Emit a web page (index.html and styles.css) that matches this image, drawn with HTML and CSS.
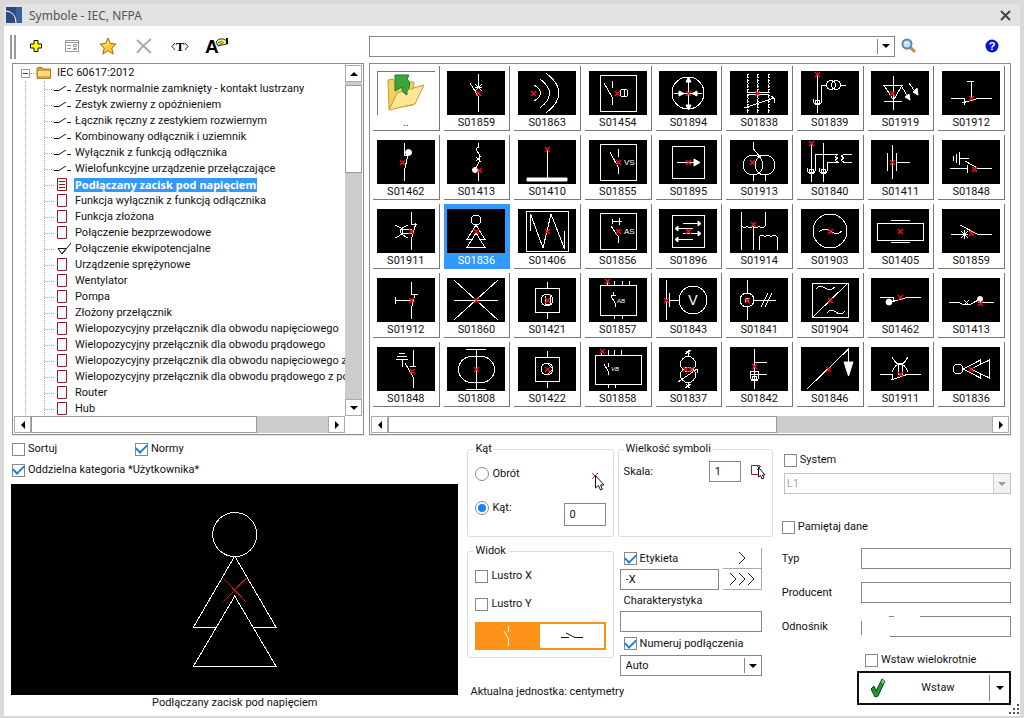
FILE: index.html
```html
<!DOCTYPE html>
<html lang="pl">
<head>
<meta charset="utf-8">
<title>Symbole - IEC, NFPA</title>
<link rel="stylesheet" href="styles.css">
</head>
<body>

<svg class="defs" width="0" height="0">
	<symbol id="x" viewBox="0 0 7 7"><path d="M1 1L6 6M6 1L1 6" stroke="#f01418" stroke-width="1.400" fill="none"/></symbol>
	<symbol id="star" viewBox="0 0 9 9"><path d="M1 1L8 8M8 1L1 8M1 4.5H8" stroke="#fff" fill="none"/></symbol>
	<symbol id="sw" viewBox="0 0 17 14"><path d="M0 8.500H5L12 4M13 8.500H17" stroke="#111" stroke-width="1" fill="none"/></symbol>
	<symbol id="doc" viewBox="0 0 17 14"><path d="M3.500 .5H12.500V12.500H3.500Z" stroke="#8c1c24" fill="#fff"/></symbol>
	<symbol id="docsel" viewBox="0 0 17 14"><path d="M3.500 .5H12.500V12.500H3.500ZM5 3.500H11M5 6.500H11M5 9.500H11" stroke="#8c1c24" fill="#fff"/></symbol>
	<symbol id="eq" viewBox="0 0 17 14"><path d="M4 6.500H12L8 12ZM8 12L17 1" stroke="#111" fill="none"/></symbol>
	<symbol id="down" viewBox="0 0 8 4"><path d="M0 0H8L4 4Z"/></symbol>
	<symbol id="up" viewBox="0 0 8 4"><path d="M0 4H8L4 0Z"/></symbol>
	<symbol id="left" viewBox="0 0 4 8"><path d="M4 0V8L0 4Z"/></symbol>
	<symbol id="right" viewBox="0 0 4 8"><path d="M0 0V8L4 4Z"/></symbol>
</svg>

<div class="window">
	<header class="titlebar">
		<svg class="logo" width="16" height="16" viewBox="0 0 16 16"><rect width="16" height="16" fill="#2b4a80"/><path d="M10 0H16V16H10Z" fill="#3c5f9a"/><path d="M0 4Q10 5 10 16M0 4V3" stroke="#fff" fill="none"/></svg>
		<h1>Symbole - IEC, NFPA</h1>
		<button class="close" aria-label="Zamknij"><svg width="11" height="11" viewBox="0 0 11 11"><path d="M1 1L10 10M10 1L1 10" stroke="#444" stroke-width="2"/></svg></button>
	</header>

	<main>
		<div class="top">
			<section class="browser">
				<div class="toolbar">
					<span class="handle"></span>
					<button aria-label="Dodaj"><svg width="20" height="20" viewBox="0 0 20 20"><path d="M8 4.500H12V8H15.500V12H12V15.500H8V12H4.500V8H8Z" fill="#ff0" stroke="#111" stroke-width="1"/></svg></button>
					<button aria-label="Właściwości"><svg width="20" height="20" viewBox="0 0 20 20"><path d="M3.500 4.500H16.500V15.500H3.500ZM3 6.500H17M5 9.500H9M5 12.500H9M11.500 8.500H14.500V10.500H11.500ZM11.500 12.500H14.500V13.500H11.500Z" fill="none" stroke="#999"/></svg></button>
					<button aria-label="Ulubione"><svg width="20" height="20" viewBox="0 0 20 20"><path d="M10 2L12.300 7.500L18 8L13.800 12L15.200 18L10 14.800L4.800 18L6.200 12L2 8L7.700 7.500Z" fill="#ffc928" stroke="#a8690c"/><path d="M10 4.500L11 8.500L8 10L5 9L9 8.500Z" fill="#fff0a0"/></svg></button>
					<button aria-label="Usuń"><svg width="20" height="20" viewBox="0 0 20 20"><path d="M3 4L17 17M17 3Q9 9 3 17" fill="none" stroke="#aaa" stroke-width="2"/></svg></button>
					<button aria-label="Tekst"><svg width="20" height="20" viewBox="0 0 20 20"><path d="M5 7L2 10.500L5 14M15 7L18 10.500L15 14" fill="none" stroke="#222"/><text class="serif" x="10" y="15" text-anchor="middle">T</text></svg></button>
					<button aria-label="Czcionka"><svg width="26" height="20" viewBox="0 0 26 20"><text class="sans" x="-1" y="17">A</text><path d="M10 6L13 3H18L21 5V8L16 9L12 10Z" fill="#f4ee62" stroke="#333"/><path d="M12 7L16 5M13 9L18 6" stroke="#555"/><path d="M20 2H22V8H20Z" fill="#111"/></svg></button>
				</div>
				<div class="panel tree">
					<div class="tree-body">
						<div class="tree-view">
							<div class="root">
								<svg width="9" height="9" viewBox="0 0 9 9"><path d="M.5.5H8.500V8.500H.5Z" fill="#fff" stroke="#999"/><path d="M2 4.500H7" stroke="#335"/></svg>
								<i class="dots"></i>
								<svg width="16" height="12" viewBox="0 0 16 12"><path d="M1 2Q1 .5 2 .5H6L7 2H14.500V11.500H1Z" fill="#d9a636" stroke="#a87f28"/><path d="M2 4H14V11H2Z" fill="#f7dc84"/><path d="M2 9H14V11H2Z" fill="#dba93c"/></svg>
								<span>IEC 60617:2012</span>
							</div>
							<div class="branch">
								<ul>
									<li><svg><use href="#sw"/></svg><span>Zestyk normalnie zamknięty - kontakt lustrzany</span></li>
									<li><svg><use href="#sw"/></svg><span>Zestyk zwierny z opóźnieniem</span></li>
									<li><svg><use href="#sw"/></svg><span>Łącznik ręczny z zestykiem rozwiernym</span></li>
									<li><svg><use href="#sw"/></svg><span>Kombinowany odłącznik i uziemnik</span></li>
									<li><svg><use href="#sw"/></svg><span>Wyłącznik z funkcją odłącznika</span></li>
									<li><svg><use href="#sw"/></svg><span>Wielofunkcyjne urządzenie przełączające</span></li>
									<li class="selected"><svg><use href="#docsel"/></svg><span>Podłączany zacisk pod napięciem</span></li>
									<li><svg><use href="#doc"/></svg><span>Funkcja wyłącznik z funkcją odłącznika</span></li>
									<li><svg><use href="#doc"/></svg><span>Funkcja złożona</span></li>
									<li><svg><use href="#doc"/></svg><span>Połączenie bezprzewodowe</span></li>
									<li><svg><use href="#eq"/></svg><span>Połączenie ekwipotencjalne</span></li>
									<li><svg><use href="#doc"/></svg><span>Urządzenie sprężynowe</span></li>
									<li><svg><use href="#doc"/></svg><span>Wentylator</span></li>
									<li><svg><use href="#doc"/></svg><span>Pompa</span></li>
									<li><svg><use href="#doc"/></svg><span>Złożony przełącznik</span></li>
									<li><svg><use href="#doc"/></svg><span>Wielopozycyjny przełącznik dla obwodu napięciowego</span></li>
									<li><svg><use href="#doc"/></svg><span>Wielopozycyjny przełącznik dla obwodu prądowego</span></li>
									<li><svg><use href="#doc"/></svg><span>Wielopozycyjny przełącznik dla obwodu napięciowego z p</span></li>
									<li><svg><use href="#doc"/></svg><span>Wielopozycyjny przełącznik dla obwodu prądowego z pol</span></li>
									<li><svg><use href="#doc"/></svg><span>Router</span></li>
									<li><svg><use href="#doc"/></svg><span>Hub</span></li>
									<li><svg><use href="#doc"/></svg></li>
								</ul>
							</div>
						</div>
						<div class="vscroll">
							<button aria-label="W górę"><svg width="8" height="4"><use href="#up"/></svg></button>
							<span class="thumb"></span>
							<button aria-label="W dół"><svg width="8" height="4"><use href="#down"/></svg></button>
						</div>
					</div>
					<div class="hscroll">
						<button aria-label="W lewo"><svg width="4" height="8"><use href="#left"/></svg></button>
						<span class="thumb"></span>
						<button aria-label="W prawo"><svg width="4" height="8"><use href="#right"/></svg></button>
						<span class="corner"></span>
					</div>
				</div>
			</section>

			<section class="library">
				<div class="search">
					<div class="combo">
						<input type="text" aria-label="Szukaj">
						<span class="arrow"><svg width="8" height="4"><use href="#down"/></svg></span>
					</div>
					<button aria-label="Szukaj"><svg width="16" height="16" viewBox="0 0 16 16"><path d="M9 9L14 14" stroke="#c98a3c" stroke-width="3"/><circle cx="6" cy="6" r="4.500" fill="#bfe3f8" stroke="#5b86a8" stroke-width="2"/><path d="M4 6Q4 4 6 4" stroke="#fff" fill="none"/></svg></button>
					<button class="help" aria-label="Pomoc"><svg width="14" height="14" viewBox="0 0 14 14"><circle cx="7" cy="7" r="6.500" fill="#0a14c8"/><text class="q" x="7" y="11" text-anchor="middle">?</text></svg></button>
				</div>
				<div class="panel symbols">
					<div class="tiles">
						<button class="tile"><svg class="up" viewBox="0 0 58 44"><path d="M0 .5H58M.5 0V44" stroke="#777"/><path d="M11 9L16 8L18 11H37L36 34L12 38Z" fill="#f3cf62" stroke="#c99a30"/><path d="M20 22L47 14L38 33L12 39Z" fill="#ffe694" stroke="#c99a30"/><path d="M18 4H32L30 8Q34 11 32 17Q29 19 30 24Q24 21 25 16L18 20Z" fill="#3aa53c" stroke="#1c7a24"/></svg>..</button>
						<button class="tile"><svg viewBox="0 0 58 44"><path d="M31.500 3V16M23 12L31.500 26V41"/><use href="#star" x="27" y="12" width="9" height="9"/><use href="#x" x="28" y="19" width="7" height="7"/></svg>S01859</button>
						<button class="tile"><svg viewBox="0 0 58 44"><path d="M16 14Q29 22 16 30M22 8Q41 22 22 37M28 2Q54 22 28 42"/><use href="#x" x="12" y="19" width="7" height="7"/></svg>S01863</button>
						<button class="tile"><svg viewBox="0 0 58 44"><path d="M11.500 4.500H47.500V40.500H11.500ZM23.500 10V17M15 12L23.500 27V34M35.500 18V26"/><circle cx="35" cy="22" r="4"/><use href="#x" x="25" y="19" width="7" height="7"/></svg>S01454</button>
						<button class="tile"><svg viewBox="0 0 58 44"><circle cx="29" cy="22" r="16"/><path d="M15 22.500H43M29.500 8V36"/><path class="f" d="M20 20L25 22.500L20 25ZM38 20L33 22.500L38 25ZM27 11L29.500 6L32 11ZM27 34L29.500 39L32 34Z"/><use href="#x" x="26" y="19" width="7" height="7"/></svg>S01894</button>
						<button class="tile"><svg viewBox="0 0 58 44"><path stroke-dasharray="4 1" d="M17.500 3V42M27.500 3V42M38.500 3V42"/><path stroke-dasharray="1 2" d="M18.500 3V42M28.500 3V42M39.500 3V42"/><path d="M18 21.500H39M18 23.500H39M14 37L44 27M41 25L45 28L44 32"/><use href="#x" x="24" y="19" width="7" height="7"/></svg>S01838</button>
						<button class="tile"><svg viewBox="0 0 58 44"><path d="M16.500 3V42M12 28Q12 34 16.500 34Q20.500 34 20.500 29V14.500H25M39 14.500H45"/><circle cx="30" cy="14" r="4.500"/><circle cx="35" cy="14" r="4.500"/><circle cx="16.500" cy="31" r="2"/><use href="#x" x="13" y="0" width="7" height="7"/></svg>S01839</button>
						<button class="tile"><svg viewBox="0 0 58 44"><path d="M22.500 5V39M13 14.500H31L22.500 29ZM13 30.500H31M31 16L37 26M38 12L45 22"/><path class="f" d="M34 26L38 23L39 29ZM42 21L46 17L47 24Z"/><use href="#x" x="18" y="19" width="7" height="7"/></svg>S01919</button>
						<button class="tile"><svg viewBox="0 0 58 44"><path d="M25 10.500H32M29.500 10V27M9 27.500H22.500V34M20 32L36 27.500H50"/><use href="#x" x="26" y="24" width="7" height="7"/></svg>S01912</button>

						<button class="tile"><svg viewBox="0 0 58 44"><path d="M27.500 3V15.500H31M31 15L27.500 30V41"/><circle class="f" cx="31.500" cy="12.500" r="3"/><use href="#x" x="22" y="19" width="7" height="7"/></svg>S01462</button>
						<button class="tile"><svg viewBox="0 0 58 44"><path d="M31.500 3V7L29 9L32 14V22L28 30M31.500 30V41M29 17L34 22M34 16L29 21"/><circle class="f" cx="28" cy="30" r="2.500"/><use href="#x" x="29" y="27" width="7" height="7"/></svg>S01413</button>
						<button class="tile"><svg viewBox="0 0 58 44"><path d="M29.500 9V38"/><path class="f" d="M9 38H49V41H9Z"/><use href="#x" x="26" y="6" width="7" height="7"/></svg>S01410</button>
						<button class="tile"><svg viewBox="0 0 58 44"><path d="M11.500 4.500H47.500V40.500H11.500ZM29.500 9V17M21 12L29.500 28V34"/><text x="35" y="25">VS</text><use href="#x" x="26" y="19" width="7" height="7"/></svg>S01855</button>
						<button class="tile"><svg viewBox="0 0 58 44"><path d="M13.500 6.500H45.500V38.500H13.500ZM18 22.500H36"/><path class="f" d="M35 19L41 22.500L35 26Z"/><use href="#x" x="26" y="19" width="7" height="7"/></svg>S01895</button>
						<button class="tile"><svg viewBox="0 0 58 44"><circle cx="23" cy="25" r="10"/><circle cx="35" cy="25" r="10"/><path d="M23.500 2V9L31 18M23.500 35V41M35.500 35V41"/><use href="#x" x="19" y="19" width="7" height="7"/></svg>S01913</button>
						<button class="tile"><svg viewBox="0 0 58 44"><path d="M10.500 3V42M22.500 3V42M6 28Q6 34 10.500 34Q14.500 34 14.500 28V14.500H36L34 17L37 18L34 20L37 22.500H26.500V28Q26.500 34 22.500 34Q18 34 18 28M51 14.500H43L40 16L43 18L40 20L43 22.500H51"/><circle cx="10.500" cy="31" r="2"/><circle cx="22.500" cy="31" r="2"/><use href="#x" x="7" y="0" width="7" height="7"/></svg>S01840</button>
						<button class="tile"><svg viewBox="0 0 58 44"><path d="M16.500 13V31M21.500 5V39M25.500 13V31M25 22.500H39"/><use href="#x" x="18" y="19" width="7" height="7"/></svg>S01411</button>
						<button class="tile"><svg viewBox="0 0 58 44"><path d="M11.500 16V21M14.500 14V23M17.500 12V25M17 18.500H27M8 28.500H26M25.500 25V33M23 21L36 28.500H50"/><use href="#x" x="29" y="26" width="7" height="7"/></svg>S01848</button>

						<button class="tile"><svg viewBox="0 0 58 44"><path d="M34.500 3V15.500H40M39 14L34.500 30V41M18 16Q34 22 18 29M31 16Q16 22 31 29M25 20.500H35M25 24.500H35"/><use href="#x" x="31" y="19" width="7" height="7"/></svg>S01911</button>
						<button class="tile selected"><svg viewBox="0 0 58 44"><circle cx="29" cy="11" r="5"/><path d="M29 16L20 30.500H24M29 16L38 30.500H34M29 24L20 38.500H38Z"/><use href="#x" x="26" y="19" width="7" height="7"/></svg>S01836</button>
						<button class="tile"><svg viewBox="0 0 58 44"><path d="M8.500 2.500H50.500V42.500H8.500ZM12.500 22V5L25 39L33 5L46.500 40V22"/><use href="#x" x="26" y="19" width="7" height="7"/></svg>S01406</button>
						<button class="tile"><svg viewBox="0 0 58 44"><path d="M11.500 4.500H47.500V40.500H11.500ZM23.500 10V15M23 12.500H33M30.500 9V16M22 17L29.500 28V34"/><text x="35" y="25">AS</text><use href="#x" x="26" y="19" width="7" height="7"/></svg>S01856</button>
						<button class="tile"><svg viewBox="0 0 58 44"><path d="M13.500 6.500H45.500V38.500H13.500ZM24 14.500H40M18 19.500H34M24 24.500H40M18 30.500H34"/><path class="f" d="M39 12L42 14.500L39 17ZM19 17L16 19.500L19 22ZM39 22L42 24.500L39 27ZM19 28L16 30.500L19 33Z"/><use href="#x" x="26" y="19" width="7" height="7"/></svg>S01896</button>
						<button class="tile"><svg viewBox="0 0 58 44"><path d="M11.500 3V41M23.500 18V41M35.500 3V17M12 17Q15 21 17 17Q20 21 23 17Q26 21 29 17Q32 21 35 17M29.500 41V28M29 28Q32 24 35 28Q38 24 41 28Q44 24 47 28M47.500 28V41"/><use href="#x" x="20" y="12" width="7" height="7"/></svg>S01914</button>
						<button class="tile"><svg viewBox="0 0 58 44"><circle cx="29" cy="22" r="17"/><path d="M18 23Q23 18 29 22Q36 27 41 22"/><use href="#x" x="26" y="19" width="7" height="7"/></svg>S01903</button>
						<button class="tile"><svg viewBox="0 0 58 44"><path d="M6.500 14.500H52.500V31.500H6.500ZM20 11.500H39M20 33.500H39"/><use href="#x" x="26" y="19" width="7" height="7"/></svg>S01405</button>
						<button class="tile"><svg viewBox="0 0 58 44"><path d="M9 25.500H24M18 16L36 25.500H50M22.500 21V30"/><use href="#star" x="18" y="21" width="9" height="9"/><use href="#x" x="26" y="21" width="7" height="7"/></svg>S01859</button>

						<button class="tile"><svg viewBox="0 0 58 44"><path d="M18.500 19V26M18 22.500H36M34.500 4V16.500H41M38 16L34.500 30V41"/><use href="#x" x="31" y="19" width="7" height="7"/></svg>S01912</button>
						<button class="tile"><svg viewBox="0 0 58 44"><path d="M7 2L51 42M51 2L7 42M7 22.500H51"/><use href="#x" x="26" y="19" width="7" height="7"/></svg>S01860</button>
						<button class="tile"><svg viewBox="0 0 58 44"><path d="M17.500 10.500H41.500V34.500H17.500ZM29.500 4V10M29.500 35V41M27 18V26H32V18"/><circle cx="29" cy="22" r="6"/><use href="#x" x="26" y="19" width="7" height="7"/></svg>S01421</button>
						<button class="tile"><svg viewBox="0 0 58 44"><path d="M11.500 7.500H47.500V37.500H11.500ZM18.500 3V7M25.500 3V7M33.500 3V7M40.500 3V7M25.500 38V41M33.500 38V41M22 17.500H27M24.500 14V18M22 18L26 25V29"/><text class="tiny" x="28" y="25">AB</text><use href="#x" x="15" y="0" width="7" height="7"/></svg>S01857</button>
						<button class="tile"><svg viewBox="0 0 58 44"><path d="M7.500 2V42M10.500 15V29M10 22.500H20"/><circle cx="34" cy="22" r="14"/><text class="big" x="34" y="27" text-anchor="middle">V</text><use href="#x" x="4" y="19" width="7" height="7"/></svg>S01843</button>
						<button class="tile"><svg viewBox="0 0 58 44"><circle cx="17" cy="22" r="7"/><circle cx="17" cy="22" r="2"/><path d="M17.500 2V15M17.500 29V42M24 22.500H46M31 29L38 15M35 29L42 15"/><use href="#x" x="14" y="19" width="7" height="7"/></svg>S01841</button>
						<button class="tile"><svg viewBox="0 0 58 44"><path d="M11.500 5.500H47.500V39.500H11.500ZM12 39L47 5M15 11Q19 6 24 10Q29 14 34 9M26 35Q30 30 35 34Q40 38 44 33"/><use href="#x" x="26" y="19" width="7" height="7"/></svg>S01904</button>
						<button class="tile"><svg viewBox="0 0 58 44"><path d="M9 19.500H22.500V24M20 24L36 19.500H50"/><circle class="f" cx="18" cy="24" r="3"/><use href="#x" x="26" y="16" width="7" height="7"/></svg>S01462</button>
						<button class="tile"><svg viewBox="0 0 58 44"><path d="M7 24.500H17L20 26H29L38 21M36 24.500H52M22 22L27 27M27 22L22 27"/><circle class="f" cx="38" cy="21" r="2.500"/><use href="#x" x="35" y="22" width="7" height="7"/></svg>S01413</button>

						<button class="tile"><svg viewBox="0 0 58 44"><path d="M22 6.500H28M20 9.500H30M19 12.500H31M25.500 12V20M36.500 3V19M33 19.500H39M28 16L36.500 31V41"/><use href="#x" x="32" y="21" width="7" height="7"/></svg>S01848</button>
						<button class="tile"><svg viewBox="0 0 58 44"><rect x="11.500" y="9.500" width="36" height="26" rx="13"/><path d="M29.500 2V42M19 2.500H39M19 42.500H39"/><use href="#x" x="26" y="19" width="7" height="7"/></svg>S01808</button>
						<button class="tile"><svg viewBox="0 0 58 44"><path d="M17.500 10.500H41.500V34.500H17.500ZM29.500 4V10M29.500 35V41M29 16L35 22L29 28"/><circle cx="29" cy="22" r="6"/><use href="#x" x="26" y="19" width="7" height="7"/></svg>S01422</button>
						<button class="tile"><svg viewBox="0 0 58 44"><path d="M6.500 8.500H52.500V37.500H6.500ZM12.500 3V8M19.500 3V8M25.500 3V8M32.500 3V8M19.500 38V41M26.500 38V41M15 17L19.500 25V28M19.500 16V20"/><text class="tiny" x="22" y="24">VB</text><use href="#x" x="10" y="1" width="7" height="7"/></svg>S01858</button>
						<button class="tile"><svg viewBox="0 0 58 44"><circle cx="29" cy="17" r="7.500"/><circle cx="29" cy="28" r="7.500"/><path d="M19 35L38 22L39 26M29.500 3V9M26 7L32 3M27 4L31 7M29.500 36V41M26 41L32 37M27 37L31 41"/><use href="#x" x="23" y="19" width="7" height="7"/><use href="#x" x="29" y="19" width="7" height="7"/></svg>S01837</button>
						<button class="tile"><svg viewBox="0 0 58 44"><path d="M24.500 2V42M25 15.500H37M19.500 27.500H37M20.500 24V30Q20.500 34 24.500 34Q28.500 34 28.500 30V24M20 24.500H29"/><circle cx="24.500" cy="31" r="2"/><use href="#x" x="21" y="16" width="7" height="7"/></svg>S01842</button>
						<button class="tile"><svg viewBox="0 0 58 44"><path d="M6 42L47.500 2V15"/><path class="f" d="M43 15H52L47.500 29Z"/><use href="#x" x="24" y="19" width="7" height="7"/></svg>S01846</button>
						<button class="tile"><svg viewBox="0 0 58 44"><path d="M9 27.500H21.500V33M20 33L36 27.500H50M21 10Q29 25 37 10M21 25Q29 8 37 25M27.500 18V28M31.500 18V28"/><use href="#x" x="26" y="24" width="7" height="7"/></svg>S01911</button>
						<button class="tile"><svg viewBox="0 0 58 44"><circle cx="16" cy="22" r="5"/><path d="M38.500 17V13L21 22L38.500 31V27M47.500 13V31L29 22Z"/><use href="#x" x="26" y="19" width="7" height="7"/></svg>S01836</button>
					</div>
					<div class="hscroll">
						<button aria-label="W lewo"><svg width="4" height="8"><use href="#left"/></svg></button>
						<span class="thumb"></span>
						<button aria-label="W prawo"><svg width="4" height="8"><use href="#right"/></svg></button>
					</div>
				</div>
			</section>
		</div>

		<div class="bottom">
			<section class="preview">
				<div class="options">
					<label><input type="checkbox">Sortuj</label>
					<label><input type="checkbox" checked>Normy</label>
					<label class="wide"><input type="checkbox" checked>Oddzielna kategoria *Użytkownika*</label>
				</div>
				<svg class="canvas" viewBox="0 0 447 211">
					<circle cx="223.500" cy="50.500" r="22"/>
					<path d="M223.500 72L182 143.500H205M223.500 72L265 143.500H242M223.500 112L182 182.500H265Z"/>
					<path class="mark" d="M212 94L235 118M235 94L212 118"/>
				</svg>
				<p>Podłączany zacisk pod napięciem</p>
			</section>

			<section class="settings">
				<fieldset class="angle">
					<legend>Kąt</legend>
					<div class="row">
						<label><input type="radio" name="angle">Obrót</label>
						<svg width="16" height="20" viewBox="0 0 16 20"><path d="M2 2L8 8M8 2L2 8" stroke="#a03040"/><path d="M5.500 4.500V17L8.500 14.500L10.500 19L12.500 18L10.500 14H14Z" fill="#fff" stroke="#111"/></svg>
					</div>
					<div class="row">
						<label><input type="radio" name="angle" checked>Kąt:</label>
						<input type="text" class="deg" value="0" aria-label="Kąt">
					</div>
				</fieldset>
				<fieldset class="size">
					<legend>Wielkość symboli</legend>
					<div class="row">
						<label for="scale">Skala:</label>
						<input type="text" id="scale" value="1">
						<svg width="16" height="16" viewBox="0 0 16 16"><path d="M1.500 1.500H9.500V10.500H1.500Z" fill="none" stroke="#9c1c24"/><path d="M6 1L11 6M11 2L7 6" stroke="#9c1c24"/><path d="M8.500 3.500V13L10.500 11.500L12 15L14 14L12.500 11H15Z" fill="#fff" stroke="#111"/></svg>
					</div>
				</fieldset>
				<fieldset class="view">
					<legend>Widok</legend>
					<label><input type="checkbox">Lustro X</label>
					<label><input type="checkbox">Lustro Y</label>
					<div class="toggle">
						<button class="on" aria-label="Pionowo"><svg width="10" height="22" viewBox="0 0 10 22"><path d="M6.500 1V7M2 6L6.500 14V21" stroke="#fff" fill="none"/></svg></button>
						<button aria-label="Poziomo"><svg width="22" height="8" viewBox="0 0 22 8"><path d="M0 5.500H8M5 1L14 5.500H22" stroke="#111" stroke-width="1" fill="none"/></svg></button>
					</div>
				</fieldset>
				<div class="labels">
					<label><input type="checkbox" checked>Etykieta</label>
					<button class="flat" aria-label="Następny"><svg width="8" height="14" viewBox="0 0 8 14"><path d="M1 1L7 7L1 13"/></svg></button>
					<input type="text" value="-X" aria-label="Etykieta">
					<button class="flat" aria-label="Ostatni"><svg width="26" height="14" viewBox="0 0 26 14"><path d="M1 1L7 7L1 13M10 1L16 7L10 13M19 1L25 7L19 13"/></svg></button>
					<label class="wide" for="char">Charakterystyka</label>
					<input class="wide" type="text" id="char">
					<label class="wide number"><input type="checkbox" checked>Numeruj podłączenia</label>
					<div class="combo wide">
						<select aria-label="Numeruj podłączenia"><option>Auto</option></select>
						<span class="arrow"><svg width="8" height="4"><use href="#down"/></svg></span>
					</div>
				</div>
				<p>Aktualna jednostka: centymetry</p>
			</section>

			<section class="data">
				<label><input type="checkbox">System</label>
				<div class="combo disabled">
					<select disabled aria-label="System"><option>L1</option></select>
					<span class="arrow"><svg width="8" height="4"><use href="#down"/></svg></span>
				</div>
				<label class="remember"><input type="checkbox">Pamiętaj dane</label>
				<div class="fields">
					<label for="typ">Typ</label><input type="text" id="typ">
					<label for="prod">Producent</label><input type="text" id="prod">
					<label for="link">Odnośnik</label><input type="text" id="link" class="worn">
				</div>
				<div class="insert">
					<label><input type="checkbox">Wstaw wielokrotnie</label>
					<div class="split">
						<button class="go"><svg width="18" height="22" viewBox="0 0 18 22"><path d="M2 12L5 9L7 14L13 2L16 4L9 19L6 20Z" fill="#1f9a2c" stroke="#123c14" stroke-width="1"/><path d="M12 5L14 2L16 4L14 7Z" fill="#9ab89a"/></svg><span>Wstaw</span></button>
						<button class="more" aria-label="Więcej"><svg width="8" height="4"><use href="#down"/></svg></button>
					</div>
				</div>
			</section>
		</div>
	</main>
	<svg class="grip" width="12" height="12" viewBox="0 0 12 12"><path d="M9 1h2v2H9zM5 5h2v2H5zM9 5h2v2H9zM1 9h2v2H1zM5 9h2v2H5zM9 9h2v2H9z" fill="#555"/></svg>
</div>

</body>
</html>
```
FILE: styles.css
```css
* { box-sizing: border-box; }

body {
	margin: 0;
	background: #d9d9d9;
	color: #111;
	font: 11px/16px Roboto, "Noto Sans", sans-serif;
}

button, input, select { font: inherit; color: inherit; }
button { padding: 0; border: none; background: none; }
p, h1, ul { margin: 0; padding: 0; }
.defs { position: absolute; }

.window {
	position: relative;
	min-height: 100vh;
	border: 4px solid #d9d9d9;
	border-bottom-width: 2px;
	background: #fff;
}

.titlebar {
	display: flex;
	align-items: center;
	gap: 7px;
	height: 22px;
	padding: 0 9px 0 2px;
	background: #e2e2e2;
}
.titlebar h1 { flex: 1; font: 12px "Noto Sans", sans-serif; color: #555; }
.close { display: flex; }

main { padding: 0 9px 0 8px; }

.top { display: grid; grid-template-columns: 352fr 642fr; gap: 5px; }
.browser, .library { min-width: 0; }

/* toolbar */
.toolbar { display: flex; align-items: center; gap: 16px; height: 37px; padding-top: 2px; }
.toolbar button { display: flex; }
.toolbar svg { overflow: visible; }
.handle { width: 6px; height: 24px; margin: 2px -6px 0 -2px; border: solid #999; border-width: 0 2px; }
.serif { font: bold 13px "Liberation Serif", serif; }
.sans { font: bold 19px "Liberation Sans", sans-serif; }
.q { font: bold 11px "Liberation Sans", sans-serif; fill: #fff; }

.search { display: flex; align-items: center; height: 37px; gap: 6px; padding-top: 3px; }
.search .combo { flex: 1; }
.search button { display: flex; }
.search .help { margin: 0 12px 0 62px; }

.panel {
	display: flex;
	flex-direction: column;
	height: 372px;
	padding: 1px;
	border: 1px solid #8a8c90;
	box-shadow: 0 1px #e8e8e8;
}

/* tree */
.tree-body { flex: 1; display: flex; min-height: 0; }
.tree-view { flex: 1; overflow: hidden; white-space: nowrap; }
.root { display: flex; align-items: center; height: 16px; padding-left: 7px; }
.root span { margin-left: 5px; }
.dots { width: 6px; border-top: 1px dotted #aaa; }
.branch { margin-left: 11px; border-left: 1px dotted #aaa; }
.branch ul { margin-left: 18px; border-left: 1px dotted #aaa; list-style: none; }
.branch li { display: flex; align-items: center; height: 16px; }
.branch li::before { content: ""; flex: none; width: 9px; border-top: 1px dotted #aaa; }
.branch li svg { flex: none; width: 17px; height: 14px; }
.branch li span { margin-left: 3px; padding: 0 1px; line-height: 14px; }
.branch .selected span { background: #3399ff; color: #fff; font-family: "Noto Sans", sans-serif; font-weight: bold; }

/* scrollbars */
.vscroll, .hscroll { display: flex; flex: none; background: #cbcccd; }
.vscroll { flex-direction: column; width: 17px; }
.hscroll { height: 17px; }
.vscroll button, .hscroll button {
	display: flex;
	flex: none;
	align-items: center;
	justify-content: center;
	width: 17px;
	height: 17px;
	border: 1px solid #aaa;
	background: #fff;
}
.thumb { border: 1px solid #999; background: #fff; }
.vscroll .thumb { height: 25%; margin: 3px 0 auto; }
.hscroll .thumb { width: 65%; margin-right: auto; }
.symbols .thumb { width: 61%; }
.corner { width: 17px; background: #fff; }

/* symbol tiles */
.tiles {
	flex: 1;
	display: grid;
	grid-template-columns: repeat(9, 1fr);
	grid-auto-rows: 65px;
	gap: 4px;
	padding: 1px 4px 0 2px;
}
.tile {
	display: flex;
	flex-direction: column;
	align-items: center;
	padding-top: 5px;
	border: solid #77787c;
	border-width: 0 1px 1px 0;
	line-height: 15px;
}
.tile svg {
	width: 58px;
	height: 44px;
	flex: none;
	background: #000;
	fill: none;
	stroke: #fff;
	shape-rendering: crispEdges;
}
.tile use { shape-rendering: geometricPrecision; }
.tile .up { background: #fff; stroke: none; shape-rendering: auto; }
.tile .f { fill: #fff; shape-rendering: auto; }
.tile text { font: 8px "Liberation Sans", sans-serif; fill: #fff; stroke: none; }
.tile .tiny { font: italic 6px "Liberation Sans", sans-serif; }
.tile .big { font-size: 14px; }
.tile.selected { background: #3399ff; border-color: #3399ff; color: #fff; }

/* form controls */
label { display: flex; align-items: center; gap: 3px; }
input[type=text] {
	width: 100%;
	min-width: 0;
	height: 21px;
	padding: 0 5px;
	border: 1px solid #85878c;
	border-radius: 0;
	background: #fff;
	outline: none;
}
input[type=checkbox], input[type=radio] {
	appearance: none;
	display: grid;
	place-content: center;
	flex: none;
	width: 13px;
	height: 13px;
	margin: 0;
	border: 1px solid #888;
	background: #fff;
}
input[type=checkbox]:checked::after {
	content: "";
	width: 9px;
	height: 5px;
	margin-bottom: 3px;
	border: solid #1c7fe0;
	border-width: 0 0 2px 2px;
	transform: rotate(-45deg);
}
input[type=radio] { width: 14px; height: 14px; border-radius: 50%; }
input[type=radio]:checked::after { content: ""; width: 8px; height: 8px; border-radius: 50%; background: #1a82f0; }

.combo { display: grid; grid-template-columns: 1fr 17px; height: 21px; border: 1px solid #85878c; }
.combo select, .combo input[type=text] {
	grid-area: 1 / 1 / 2 / 3;
	appearance: none;
	width: 100%;
	height: 19px;
	padding: 0 5px;
	border: none;
	border-radius: 0;
	background: none;
	outline: none;
}
.combo .arrow {
	grid-area: 1 / 2;
	display: grid;
	place-content: center;
	margin: 2px 0;
	border-left: 1px solid #888;
	pointer-events: none;
}
.combo.disabled { border-color: #c0c0c0; }
.combo.disabled select { padding: 0 2px; color: #aaa; opacity: 1; }
.combo.disabled .arrow { margin: 0; border-color: #ccc; background: #f2f2f2; fill: #999; }

fieldset { min-width: 0; margin: 0; padding: 0 7px; border: 1px solid #d5dfe5; border-radius: 3px; }
legend { padding: 0 2px; margin-left: -2px; }

/* bottom part */
.bottom { display: grid; grid-template-columns: 447fr 305fr 229fr; gap: 9px; margin-left: -1px; padding-top: 6px; }

.options { display: grid; grid-template-columns: 123px 1fr; row-gap: 5px; padding: 0 0 6px 1px; }
.options .wide { grid-column: 1 / 3; }
.canvas { display: block; width: 100%; background: #000; fill: none; stroke: #fff; shape-rendering: crispEdges; }
.canvas .mark { stroke: #c01418; }
.preview p { text-align: center; line-height: 15px; }

.settings {
	display: grid;
	grid-template-columns: 146fr 155fr;
	gap: 6px 4px;
	align-items: start;
	align-content: start;
}
.settings .row { display: flex; align-items: center; justify-content: space-between; }
.angle, .size { height: 96px; }
.angle .row { height: 34px; }
.angle svg { margin-top: 14px; }
.angle .deg { width: 42px; height: 23px; margin-top: 12px; }
.size .row { gap: 9px; padding-top: 4px; }
.size .row label { flex: 1; margin-left: -2px; }
.size .row input { width: 32px; }
.size .row svg { margin-right: -1px; }
.view { height: 115px; }
.view legend + label { margin-top: 3px; }
.view label { height: 28px; }
.view .toggle { display: flex; height: 28px; margin-top: 4px; border: 2px solid #f7941d; border-left: none; }
.toggle button { flex: 1; display: grid; place-content: center; }
.toggle .on { background: #ff9218; }

.labels { display: grid; grid-template-columns: 99px 39px; gap: 0 4px; padding: 5px 0 0 2px; }
.labels .wide { grid-column: 1 / 3; }
.labels label { padding-left: 4px; height: 21px; }
.labels .number { height: 23px; }
.flat { display: grid; place-content: center; border: solid #aaa; border-width: 0 1px 1px 0; }
.flat svg { fill: none; stroke: #222; }
.settings p { grid-column: 1 / 3; padding: 2px 0 0 3px; }

.data { padding: 11px 0 0 2px; }
.data .combo { margin-top: 5px; }
.data .remember { margin: 25px 0 0 -2px; }
.fields { display: grid; grid-template-columns: 1fr 150px; row-gap: 13px; margin: 13px 0 0 -2px; }
.fields input.worn {
	border-color: transparent;
	background:
		linear-gradient(#85878c, #85878c) 0 5px / 1px 14px no-repeat border-box,
		linear-gradient(#85878c, #85878c) 28px 0 / 5px 1px no-repeat border-box,
		linear-gradient(#85878c, #85878c) 100% 0 / 91px 1px no-repeat border-box,
		linear-gradient(#85878c, #85878c) 100% 100% / 121px 1px no-repeat border-box,
		linear-gradient(#85878c, #85878c) 100% 0 / 1px 100% no-repeat border-box;
}
.insert { width: 154px; margin: 15px 0 0 auto; }
.insert label { padding-left: 8px; }
.split { display: flex; height: 34px; margin-top: 3px; border: 2px solid #111; }
.go { flex: 1; display: flex; align-items: center; padding-left: 10px; }
.go span { flex: 1; }
.more { display: grid; place-content: center; width: 20px; margin: 2px 0; border-left: 1px solid #888; }

.grip { position: absolute; right: 0; bottom: 1px; }
```
